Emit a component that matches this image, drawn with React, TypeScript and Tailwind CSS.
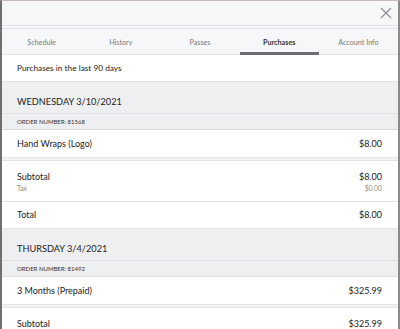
import React from "react";

const tabs = ["Schedule", "History", "Passes", "Purchases", "Account Info"];

const orders = [
  {
    date: "WEDNESDAY 3/10/2021",
    number: "81568",
    items: [{ name: "Hand Wraps (Logo)", price: "$8.00" }],
    subtotal: "$8.00",
    tax: "$0.00",
    total: "$8.00",
  },
  {
    date: "THURSDAY 3/4/2021",
    number: "81492",
    items: [{ name: "3 Months (Prepaid)", price: "$325.99" }],
    subtotal: "$325.99",
    tax: "$0.00",
    total: "$325.99",
  },
];

const OrderBlock = ({ order }: { order: (typeof orders)[number] }) => (
  <div>
    <div className="bg-[#eeeff1] h-[32px] flex items-end pb-[6px] pl-[15px] pr-[16px] border-b border-[#dfe0e3]">
      <span className="text-[9.2px] leading-[10px] text-[#222]">{order.date}</span>
    </div>
    <div className="bg-[#eeeff1] h-[16px] flex items-center pl-[15px] pr-[16px] border-b border-[#dcdde0]">
      <span className="text-[6px] text-[#333]">ORDER NUMBER: {order.number}</span>
    </div>
    {order.items.map((item, i) => (
      <div
        key={i}
        className="bg-white h-[28px] flex items-center justify-between pl-[15px] pr-[16px] border-b border-[#e3e4e7] text-[9px] text-[#222]"
      >
        <span>{item.name}</span>
        <span>{item.price}</span>
      </div>
    ))}
    <div className="h-[2px] bg-[#f1f2f4]" />
    <div className="bg-white h-[41px] border-t border-[#e3e4e7] pl-[15px] pr-[16px] pt-[10px]">
      <div className="flex justify-between text-[9px] text-[#222] leading-[11px]">
        <span>Subtotal</span>
        <span>{order.subtotal}</span>
      </div>
      <div className="flex justify-between text-[6.8px] text-[#8a8a8a] leading-[10px] mt-[1px]">
        <span>Tax</span>
        <span>{order.tax}</span>
      </div>
    </div>
    <div className="bg-white h-[28px] flex items-center justify-between pl-[15px] pr-[16px] border-t border-b border-[#e3e4e7] text-[9px] text-[#222]">
      <span>Total</span>
      <span>{order.total}</span>
    </div>
  </div>
);

export default function App() {
  return (
    <div
      className="w-[400px] h-[329px] overflow-hidden bg-white border-l-2 border-r-2 border-l-[#6f6f72] border-r-[#8a8a8d] border-t border-t-[#c9b9be]"
      style={{ fontFamily: "Lato, 'Open Sans', sans-serif" }}
    >
      <div className="bg-[#f6f7f9] h-[25px] flex items-center justify-end pr-[6px] border-b border-[#e2e3e6]">
        <svg width="12" height="12" viewBox="0 0 12 12" stroke="#8d8f94" strokeWidth="1.2">
          <path d="M1 1 L11 11 M11 1 L1 11" />
        </svg>
      </div>
      <div className="h-[2px] bg-[#f6f7f9]" />
      <div className="bg-[#f6f7f9] flex h-[27px] border-t border-b border-[#e2e3e6]">
        {tabs.map((t) => (
          <div
            key={t}
            className={`flex-1 flex items-center justify-center pt-[3px] text-[7.2px] relative ${
              t === "Purchases" ? "text-[#333] font-bold" : "text-[#7a7a7a]"
            }`}
          >
            {t}
            {t === "Purchases" && (
              <div className="absolute left-0 right-0 bottom-[-1px] h-[3px] bg-[#6c6e74]" />
            )}
          </div>
        ))}
      </div>
      <div className="h-[27px] flex items-center pl-[15px] border-b border-[#e0e1e4] text-[8.3px] text-[#222]">
        Purchases in the last 90 days
      </div>
      {orders.map((o) => (
        <OrderBlock key={o.number} order={o} />
      ))}
    </div>
  );
}
